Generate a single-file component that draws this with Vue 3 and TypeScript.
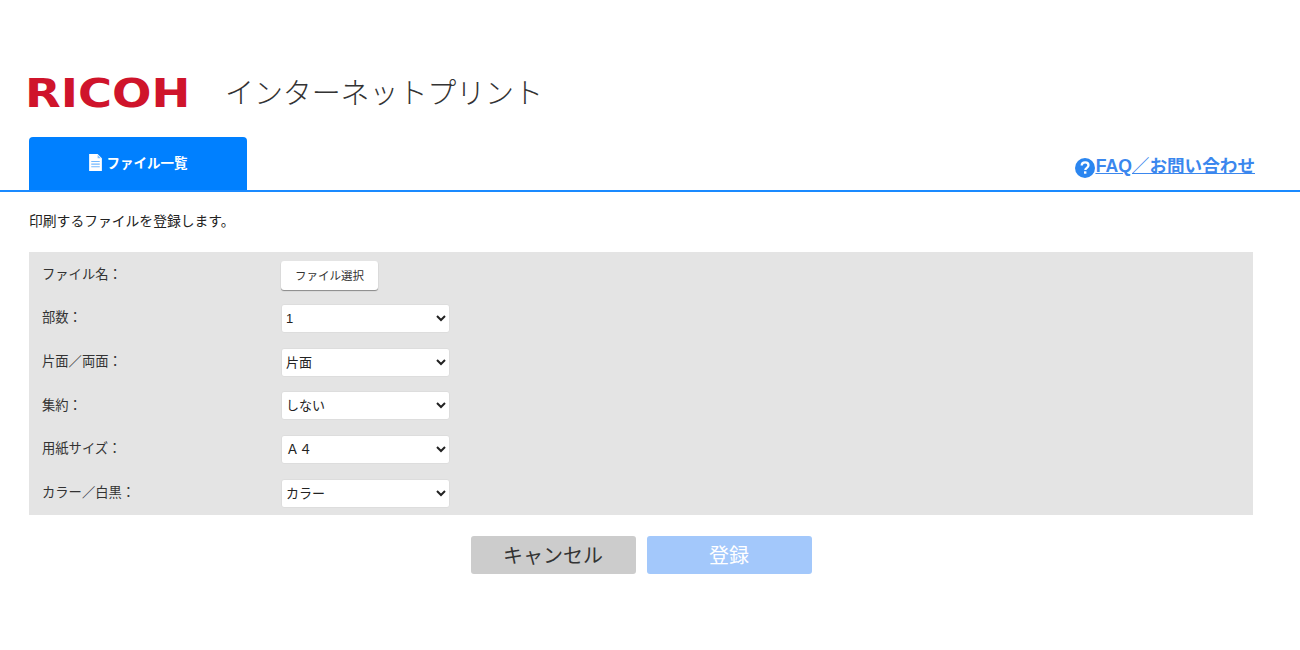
<script setup lang="ts">
interface Row { label: string; options: string[] }
const rows: Row[] = [
  { label: '部数：', options: ['1', '2', '3'] },
  { label: '片面／両面：', options: ['片面', '両面'] },
  { label: '集約：', options: ['しない', '2アップ'] },
  { label: '用紙サイズ：', options: ['Ａ４', 'Ａ３'] },
  { label: 'カラー／白黒：', options: ['カラー', '白黒'] },
]
</script>

<template>
  <div class="page">
    <header class="brand">
      <span class="logo-box"><span class="logo">RICOH</span></span>
      <h1 class="title">インターネットプリント</h1>
    </header>
    <nav class="nav">
      <div class="tab">
        <svg class="doc" viewBox="0 0 14 16" width="15" height="17" aria-hidden="true">
          <path fill="#fff" d="M1 0h8l4 4v12H1z" />
          <path fill="#0080ff" opacity=".55" d="M3 6.500h8v1H3zM3 9h8v1H3zM3 11.500h8v1H3z" />
          <path fill="#0080ff" d="M9 0v4h4l-1 0-3-3z" opacity=".5" />
        </svg>
        <span>ファイル一覧</span>
      </div>
      <a class="faq" href="#">
        <svg class="help" viewBox="0 0 20 20" width="20" height="20" aria-hidden="true">
          <circle cx="10" cy="10" r="10" fill="#2b86f0" />
          <path d="M6.700 7.600c0-2 1.500-3.200 3.500-3.200s3.300 1.200 3.300 2.900c0 2.600-3.200 2.500-3.200 4.800" fill="none" stroke="#fff" stroke-width="2.300" />
          <rect x="9" y="13.300" width="2.400" height="2.400" fill="#fff" />
        </svg><span>FAQ／お問い合わせ</span>
      </a>
    </nav>
    <p class="intro">印刷するファイルを登録します。</p>
    <section class="panel">
      <div class="row first">
        <label class="label">ファイル名：</label>
        <button type="button" class="file">ファイル選択</button>
      </div>
      <div v-for="row in rows" :key="row.label" class="row">
        <label class="label">{{ row.label }}</label>
        <select class="select">
          <option v-for="o in row.options" :key="o">{{ o }}</option>
        </select>
      </div>
    </section>
    <div class="actions">
      <button type="button" class="btn cancel">キャンセル</button>
      <button type="button" class="btn submit">登録</button>
    </div>
  </div>
</template>

<style scoped>
.page {
  width: 1300px;
  height: 650px;
  overflow: hidden;
  background: #fff;
  font-family: "Liberation Sans", "Noto Sans CJK JP", sans-serif;
  color: #222;
}
.brand {
  display: flex;
  align-items: center;
  height: 137px;
  padding: 50px 0 0 27px;
  box-sizing: border-box;
}
.logo-box {
  width: 200px;
  margin-left: -2px;
  margin-top: 3px;
  flex: none;
  display: block;
}
.logo {
  font-family: "DejaVu Sans", sans-serif;
  font-weight: 700;
  font-size: 39px;
  line-height: 30px;
  color: #cf142b;
  display: inline-block;
  transform: scaleX(1.19);
  transform-origin: left center;
}
.title {
  margin: 0;
  font-weight: 300;
  font-size: 29px;
  line-height: 40px;
  color: #333;
  letter-spacing: -0.1px;
}
.nav {
  display: flex;
  justify-content: space-between;
  align-items: flex-end;
  height: 55px;
  box-sizing: border-box;
  padding: 0 45px 0 29px;
  border-bottom: 2px solid #1a8aff;
}
.tab {
  width: 218px;
  height: 53px;
  box-sizing: border-box;
  padding-bottom: 4px;
  background: #0080ff;
  border-radius: 4px 4px 0 0;
  color: #fff;
  font-size: 13.500px;
  font-weight: 700;
  display: flex;
  align-items: center;
  justify-content: center;
  gap: 4px;
}
.doc { margin-top: 2px; margin-left: -1px; }
.faq {
  display: flex;
  align-items: center;
  margin-bottom: 11px;
  color: #3b87ee;
  font-size: 17.600px;
  font-weight: 700;
  line-height: 26px;
}
.faq span { text-decoration: underline; }
.help { margin-right: 1px; margin-top: 3px; }
.intro {
  margin: 0;
  padding: 21px 0 0 29px;
  height: 60px;
  box-sizing: border-box;
  font-size: 13.800px;
  line-height: 18px;
  color: #222;
}
.panel {
  margin-left: 29px;
  width: 1224px;
  height: 263px;
  box-sizing: border-box;
  padding-top: 8.600px;
  background: #e4e4e4;
  display: flex;
  flex-direction: column;
  gap: 14.600px;
}
.row {
  display: flex;
  align-items: center;
  height: 29px;
  padding-left: 13px;
}
.label {
  width: 239px;
  font-size: 13.300px;
  line-height: 18px;
  margin-top: -0.6px;
  color: #333;
}
.file {
  width: 97px;
  height: 29px;
  padding: 0;
  border: 0;
  border-radius: 3px;
  background: #fff;
  box-shadow: 0 1px 1px #888;
  font: inherit;
  font-size: 11.500px;
  color: #333;
}
.select {
  width: 169px;
  height: 29px;
  border: 1px solid #ddd;
  border-radius: 3px;
  background: #fff;
  font: inherit;
  font-size: 13px;
  color: #222;
  padding-left: 0;
}
.actions {
  display: flex;
  justify-content: center;
  gap: 11px;
  padding: 21px 18px 0 0;
}
.btn {
  width: 165px;
  height: 38px;
  border: 0;
  border-radius: 3px;
  padding: 0 0 2px;
  font: inherit;
  font-size: 20px;
}
.cancel { background: #ccc; color: #333; }
.submit { background: #a3c8fb; color: #fff; }
</style>

<style>
html, body { margin: 0; background: #fff; }
</style>
